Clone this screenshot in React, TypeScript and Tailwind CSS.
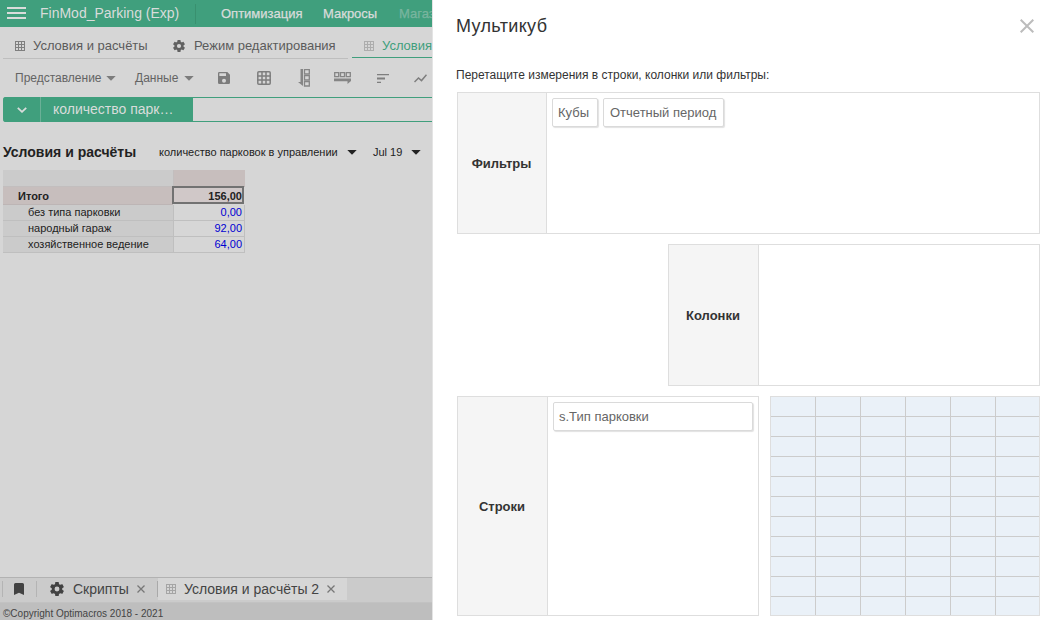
import React from "react";

function Gear({ className }: { className: string }) {
  return (
    <svg viewBox="2 2 20 20" fill="currentColor" className={className}>
      <path d="M19.43 12.98c.04-.32.07-.64.07-.98s-.03-.66-.07-.98l2.11-1.65a.5.5 0 0 0 .12-.64l-2-3.46a.5.5 0 0 0-.61-.22l-2.49 1a7.3 7.3 0 0 0-1.69-.98l-.38-2.65A.49.49 0 0 0 14 2h-4a.49.49 0 0 0-.49.42l-.38 2.65c-.61.25-1.17.59-1.69.98l-2.49-1a.5.5 0 0 0-.61.22l-2 3.46a.5.5 0 0 0 .12.64l2.11 1.65c-.04.32-.07.65-.07.98s.03.66.07.98l-2.11 1.65a.5.5 0 0 0-.12.64l2 3.46c.12.22.39.3.61.22l2.49-1c.52.4 1.08.73 1.69.98l.38 2.65c.03.24.24.42.49.42h4c.25 0 .46-.18.49-.42l.38-2.65c.61-.25 1.17-.59 1.69-.98l2.49 1c.23.09.49 0 .61-.22l2-3.46a.5.5 0 0 0-.12-.64zM12 15.5a3.5 3.5 0 1 1 0-7 3.5 3.5 0 0 1 0 7z" />
    </svg>
  );
}

function GridIcon({ className }: { className: string }) {
  return (
    <svg viewBox="0 0 10 10" fill="none" stroke="currentColor" shapeRendering="crispEdges" className={className}>
      <path d="M.5.5h9v9h-9zM3.5 0v10M6.5 0v10M0 3.5h10M0 6.5h10" />
    </svg>
  );
}

function Caret({ className }: { className: string }) {
  return (
    <svg viewBox="0 0 10 5" fill="currentColor" className={className}>
      <path d="M.3 0h9.400L5 4.800z" />
    </svg>
  );
}

function Cross({ className }: { className: string }) {
  return (
    <svg viewBox="0 0 10 10" fill="none" stroke="currentColor" strokeWidth="1.3" className={className}>
      <path d="M1.500 1.500l7 7M8.500 1.500l-7 7" />
    </svg>
  );
}

function TopBar() {
  return (
    <header className="flex h-[27px] shrink-0 items-center bg-[#409f7d] text-[#d9dcdb]">
      <svg viewBox="0 0 19 12" fill="currentColor" className="-mt-px ml-[7px] h-3 w-[19px] shrink-0" shapeRendering="crispEdges">
        <path d="M0 0h19v2H0zM0 5h19v2H0zM0 10h19v2H0z" />
      </svg>
      <span className="ml-[14px] w-[155px] shrink-0 text-[14px]">FinMod_Parking (Exp)</span>
      <span className="h-[20px] w-px shrink-0 bg-[#39906f]" />
      <nav className="ml-[25px] flex gap-[20px] text-[13px] [-webkit-text-stroke:0.25px_currentColor]">
        <span className="w-[82px]">Оптимизация</span>
        <span className="w-[56px]">Макросы</span>
        <span className="text-[#79b59f]">Магазин</span>
      </nav>
    </header>
  );
}

function Tabs() {
  return (
    <div className="flex h-[32px] shrink-0 pl-[3px] text-[13px] text-[#5b5b5b]">
      <div className="flex w-[345px] shrink-0 items-center border-b border-[#bebebe] pt-[7px]">
        <GridIcon className="ml-[12px] size-[10px] text-[#7f7f7f]" />
        <span className="ml-[8px] w-[131px]">Условия и расчёты</span>
        <Gear className="ml-[9px] size-[12px] text-[#616161]" />
        <span className="ml-[9px]">Режим редактирования</span>
      </div>
      <div className="ml-[4px] flex h-[31px] w-[150px] shrink-0 items-center border-b border-[#409f7d] pt-[8px]">
        <GridIcon className="ml-[12px] size-[10px] text-[#adadad]" />
        <span className="ml-[8px] text-[#409f7d]">Условия и расчёты</span>
      </div>
    </div>
  );
}

function Toolbar() {
  return (
    <div className="flex h-[38px] shrink-0 items-center pl-[15px] text-[12px] text-[#646464]">
      <span className="w-[91px] shrink-0">Представление</span>
      <Caret className="h-[5px] w-[10px] shrink-0 text-[#7c7c7c]" />
      <span className="ml-[19px] w-[49px] shrink-0">Данные</span>
      <Caret className="h-[5px] w-[10px] shrink-0 text-[#7c7c7c]" />
      <svg viewBox="3 3 18 18" fill="#7c7c7c" className="ml-[24px] size-[12px] shrink-0">
        <path d="M17 3H5a2 2 0 0 0-2 2v14a2 2 0 0 0 2 2h14a2 2 0 0 0 2-2V7zm-5 16a3 3 0 1 1 0-6 3 3 0 0 1 0 6zm3-10H5V5h10z" />
      </svg>
      <svg viewBox="0 0 14 14" fill="none" stroke="#7e7e7e" strokeWidth="1.5" className="ml-[27px] size-[14px] shrink-0">
        <rect x=".8" y=".8" width="12.4" height="12.4" rx="1" />
        <path d="M5 0v14M9 0v14M0 5h14M0 9h14" />
      </svg>
      <svg viewBox="0 0 12 18" fill="none" stroke="#858585" strokeWidth="1.3" className="ml-[27px] h-[18px] w-[12px] shrink-0">
        <path d="M6.5.7h4.800v4.300H6.500zM6.500 6.700h4.800V11H6.500zM6.500 12.700h4.800V17H6.500z" />
        <path d="M2.500 0h2.500v17L0 13h2.500z" fill="#858585" stroke="none" />
      </svg>
      <svg viewBox="0 0 17 12" fill="none" stroke="#858585" strokeWidth="1.3" className="ml-[24px] h-[12px] w-[17px] shrink-0">
        <path d="M.7.6h4v4h-4zM6.500.6h4v4h-4zM12.300.6h4v4h-4z" />
        <path d="M0 6.500h17V9l-3.500 3V9.200H0z" fill="#858585" stroke="none" />
      </svg>
      <svg viewBox="0 0 12 9" fill="#7e7e7e" className="ml-[26px] h-[9px] w-[12px] shrink-0">
        <path d="M0 0h12v1.200H0zM0 3.600h8v1.800H0zM0 7.700h4v1.200H0z" />
      </svg>
      <svg viewBox="0 0 13 9" fill="none" stroke="#7e7e7e" strokeWidth="1.5" className="ml-[25px] h-[9px] w-[13px] shrink-0">
        <path d="M.5 8l4-4 3 2.600L12.500.8" />
      </svg>
    </div>
  );
}

function CubeBar() {
  return (
    <div className="ml-[3px] flex h-[25px] shrink-0 rounded-l-[3px] border-y border-[#409f7d] bg-[#d6d6d6] text-[14px] text-[#d9dcdb]">
      <div className="-my-px flex w-[190px] shrink-0 items-center rounded-l-[3px] bg-[#409f7d]">
        <span className="flex h-full w-[38px] items-center justify-center border-r border-[#6bb097]">
          <svg viewBox="0 0 10 6" fill="none" stroke="currentColor" strokeWidth="1.800" className="h-[6px] w-[10px]">
            <path d="M.8.8L5 4.800l4.200-4" />
          </svg>
        </span>
        <span className="ml-[12px]">количество парк…</span>
      </div>
    </div>
  );
}

const rows: [string, string][] = [
  ["без типа парковки", "0,00"],
  ["народный гараж", "92,00"],
  ["хозяйственное ведение", "64,00"],
];

function DataTable() {
  return (
    <div className="ml-[3px] w-[242px] shrink-0 text-[11px] leading-[15px] text-[#222]">
      <div className="flex h-[17px]">
        <div className="w-[171px] border-r border-b border-[#c2bebe] bg-[#cbcbcb]" />
        <div className="w-[71px] border-b border-[#bcb3b3] bg-[#c7bebd]" />
      </div>
      <div className="flex h-[18px] font-bold">
        <div className="w-[170px] border-b border-[#bdb5b5] bg-[#c7bebd] pl-[15px] leading-[18px]">Итого</div>
        <div className="-mt-px -ml-px h-[18px] w-[72px] border-2 border-[#727272] bg-[#d0c8c8] text-right leading-[16px]">156,00</div>
      </div>
      {rows.map(([name, value]) => (
        <div key={name} className="flex h-[16px]">
          <div className="w-[171px] border-r border-b border-[#bfbfbf] bg-[#cbcbcb] pl-[25px]">{name}</div>
          <div className="w-[71px] border-r border-b border-[#bfbfbf] bg-[#d6d6d6] pr-[2px] text-right text-[#0000d2]">{value}</div>
        </div>
      ))}
    </div>
  );
}

function BottomTabs() {
  return (
    <div className="flex h-[26px] shrink-0 items-center border-t border-b border-t-[#b2b2b2] border-b-[#c2c2c2] bg-[#cbcbcb] pb-[2px] text-[14px] text-[#444]">
      <span className="ml-[2px] h-[16px] w-px bg-[#b4b4b4]" />
      <svg viewBox="0 0 10 12" fill="#424242" className="ml-[11px] h-[12px] w-[10px]">
        <path d="M1.500 0h7Q10 0 10 1.500V12L5 9.800 0 12V1.500Q0 0 1.500 0z" />
      </svg>
      <span className="ml-[12px] h-[16px] w-px bg-[#b4b4b4]" />
      <Gear className="ml-[13px] size-[14px] text-[#424242]" />
      <span className="ml-[9px] w-[63px]">Скрипты</span>
      <Cross className="size-[10px] text-[#777]" />
      <span className="ml-[11px] h-[16px] w-px bg-[#a9a9a9]" />
      <div className="flex h-[22px] w-[189px] items-center bg-[#d6d6d6]">
        <GridIcon className="ml-[8px] size-[10px] text-[#a5a5a5]" />
        <span className="ml-[8px] w-[142px]">Условия и расчёты 2</span>
        <Cross className="size-[10px] text-[#777]" />
      </div>
    </div>
  );
}

function Zone({ label, className, labelClass, children }: { label: string; className: string; labelClass: string; children?: React.ReactNode }) {
  return (
    <section className={`flex border border-[#dedede] ${className}`}>
      <div className={`flex shrink-0 items-center justify-center border-r border-[#dedede] bg-[#f5f5f5] pt-[2px] pr-px text-[13px] font-bold text-[#333] ${labelClass}`}>{label}</div>
      <div className="flex flex-1 items-start gap-[5px] p-[5px]">{children}</div>
    </section>
  );
}

function Chip({ children, className }: { children: React.ReactNode; className: string }) {
  return (
    <span className={`flex h-[29px] items-center rounded-[2px] border border-[#dadada] bg-white text-[13px] text-[#666] shadow-[1px_1px_1px_rgba(0,0,0,0.12)] ${className}`}>
      {children}
    </span>
  );
}

function MulticubeDrawer() {
  return (
    <aside className="absolute inset-y-0 left-[432px] w-[617px] border-l border-[#e4e4e4] bg-white pl-[24px] text-[#333]">
      <div className="flex h-[60px] items-start justify-between pr-[15px]">
        <h1 className="-ml-px pt-[13px] text-[18px] leading-[26px] tracking-[0.35px]">Мультикуб</h1>
        <svg viewBox="0 0 14 14" fill="none" stroke="#bcbcbc" strokeWidth="2" className="mt-[19px] size-[14px]">
          <path d="M.7.7l12.600 12.600M13.300.7L.7 13.300" />
        </svg>
      </div>
      <p className="-ml-px h-[32px] pt-[7px] text-[12px] leading-[16px]">Перетащите измерения в строки, колонки или фильтры:</p>
      <Zone label="Фильтры" className="h-[142px] w-[583px]" labelClass="w-[89px]">
        <Chip className="w-[46px] pl-[5px]">Кубы</Chip>
        <Chip className="w-[121px] pl-[6px]">Отчетный период</Chip>
      </Zone>
      <Zone label="Колонки" className="mt-[10px] ml-[211px] h-[142px] w-[372px]" labelClass="w-[90px]" />
      <div className="mt-[10px] flex gap-[11px]">
        <Zone label="Строки" className="h-[220px] w-[302px]" labelClass="w-[90px]">
          <Chip className="w-[200px] pl-[5px]">s.Тип парковки</Chip>
        </Zone>
        <div className="grid h-[220px] w-[270px] grid-cols-[repeat(5,45px)_43px] grid-rows-[repeat(10,20px)_18px] overflow-hidden border border-[#dedede] bg-[#eaf1f8]">
          {Array.from({ length: 66 }, (_, i) => (
            <div
              key={i}
              className={`${i % 6 < 5 ? "border-r" : ""} ${i < 60 ? "border-b" : ""} border-[#cccccc]`}
            />
          ))}
        </div>
      </div>
    </aside>
  );
}

export default function App() {
  return (
    <div className="relative h-[620px] w-[1049px] overflow-hidden bg-[#d6d6d6] font-['Liberation_Sans',Arial,sans-serif]">
      <div className="flex h-full w-[432px] flex-col overflow-hidden whitespace-nowrap">
        <TopBar />
        <Tabs />
        <Toolbar />
        <CubeBar />
        <div className="flex h-[48px] shrink-0 items-center pt-[13px] pl-[3px] text-[11px] text-[#222]">
          <h2 className="w-[156px] text-[14px] font-bold">Условия и расчёты</h2>
          <span className="w-[188px]">количество парковок в управлении</span>
          <Caret className="h-[5px] w-[10px]" />
          <span className="ml-[16px] w-[38px]">Jul 19</span>
          <Caret className="h-[5px] w-[10px]" />
        </div>
        <DataTable />
        <div className="flex-1" />
        <BottomTabs />
        <footer className="h-[17px] shrink-0 bg-[#bebebe] pt-[3px] pl-[3px] text-[10px] leading-[16px] text-[#444]">©Copyright Optimacros 2018 - 2021</footer>
      </div>
      <MulticubeDrawer />
    </div>
  );
}
